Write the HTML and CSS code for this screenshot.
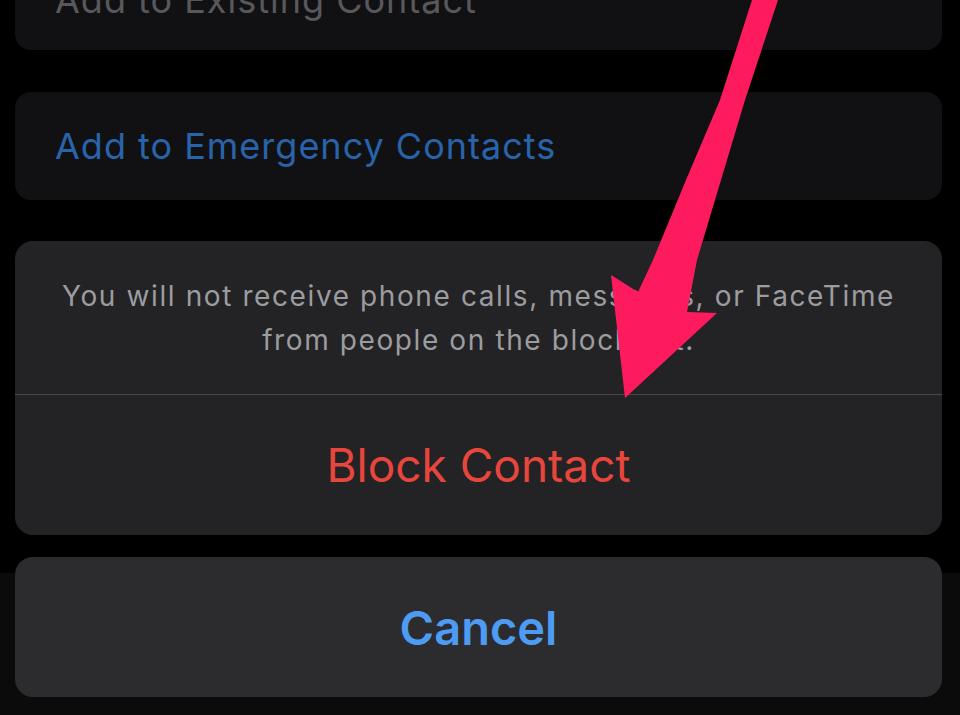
FILE: index.html
```html
<!DOCTYPE html>
<html lang="en">
<head>
<meta charset="utf-8">
<title>Block Contact</title>
<link rel="stylesheet" href="styles.css">
</head>
<body>
<div class="screen">
  <div class="list">
    <div class="card card-top"><span class="item item-dim">Add to Existing Contact</span></div>
    <div class="card"><span class="item item-link">Add to Emergency Contacts</span></div>
  </div>
  <div class="sheet">
    <div class="sheet-group">
      <p class="sheet-message">You will not receive phone calls, messages, or FaceTime from people on the block list.</p>
      <div class="sheet-action"><span class="destructive">Block Contact</span></div>
    </div>
    <div class="sheet-cancel"><span class="cancel">Cancel</span></div>
  </div>
  <svg class="arrow" width="960" height="715" viewBox="0 0 960 715" aria-hidden="true">
    <polygon points="752,0 720,100 686,180 653,260 638,292 611,275 625,398 717,313 687,312 697,260 721,180 745,100 778,0" fill="#fe1b5d"/>
  </svg>
</div>
</body>
</html>
```
FILE: styles.css
```css
html, body {
  margin: 0;
  padding: 0;
}
body {
  width: 960px;
  height: 715px;
  overflow: hidden;
  background: linear-gradient(to bottom, #000 573px, #0b0b0c 573px);
  font-family: Inter, "Liberation Sans", Arial, sans-serif;
}
.screen {
  position: relative;
  width: 960px;
  height: 715px;
  padding-left: 15px;
  box-sizing: border-box;
}
.list {
  display: flex;
  flex-direction: column;
  gap: 42px;
  width: 927px;
}
.card {
  height: 108px;
  background: #111113;
  border-radius: 16px;
  display: flex;
  align-items: center;
  padding-left: 40px;
  box-sizing: border-box;
}
.card-top {
  height: 100px;
  margin-top: -50px;
}
.item {
  font-size: 36px;
  letter-spacing: 1px;
  line-height: 1;
}
.item-dim {
  color: #58585c;
}
.item-link {
  color: #2764ab;
}
.sheet {
  display: flex;
  flex-direction: column;
  gap: 22px;
  width: 927px;
  margin-top: 41px;
}
.sheet-group {
  background: #232325;
  border-radius: 18px;
  overflow: hidden;
}
.sheet-message {
  margin: 0;
  padding: 33px 28px 32px;
  border-bottom: 1px solid #48484b;
  text-align: center;
  color: #9c9ca0;
  font-size: 28px;
  letter-spacing: 1.6px;
  line-height: 44px;
}
.sheet-action {
  height: 140px;
  display: flex;
  align-items: center;
  justify-content: center;
}
.destructive {
  color: #e8463d;
  font-size: 46px;
  line-height: 1;
}
.sheet-cancel {
  height: 140px;
  background: #2c2c2e;
  border-radius: 18px;
  display: flex;
  align-items: center;
  justify-content: center;
}
.cancel {
  color: #4e9bf3;
  font-size: 47px;
  font-weight: 600;
  line-height: 1;
}
.arrow {
  position: absolute;
  left: 0;
  top: 0;
  pointer-events: none;
}
```
